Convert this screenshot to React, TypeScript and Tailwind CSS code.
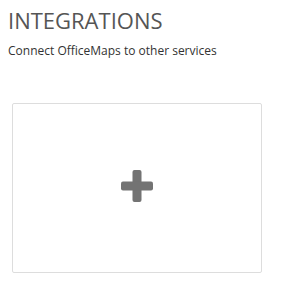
const App = () => {
  return (
    <div className="w-[287px] h-[285px] bg-white pt-[5px] px-[8px]" style={{ fontFamily: '"Open Sans", sans-serif' }}>
      <h1 className="text-[22px] leading-[30px] text-[#555555] font-normal">INTEGRATIONS</h1>
      <p className="mt-[7px] text-[12px] leading-[17px] text-[#333333]">Connect OfficeMaps to other services</p>
      <div className="mt-[44px] ml-[4px] w-[250px] h-[170px] pb-[4px] border border-[#dddddd] rounded-[2px] flex items-center justify-center">
        <svg width="32" height="32" viewBox="0 0 32 32">
          <rect x="11.5" y="0" width="9" height="32" rx="2" fill="#737373" />
          <rect x="0" y="11.5" width="32" height="9" rx="2" fill="#737373" />
        </svg>
      </div>
    </div>
  );
};

export default App;
